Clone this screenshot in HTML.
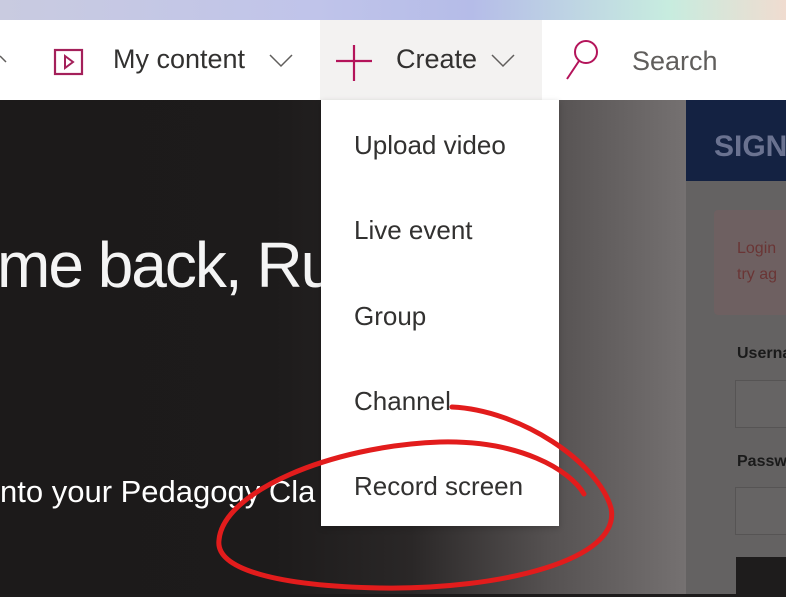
<!DOCTYPE html>
<html><head><meta charset="utf-8"><style>
*{margin:0;padding:0;box-sizing:border-box}
body{width:786px;height:594px;overflow:hidden;position:relative;font-family:"Liberation Sans",sans-serif;background:#1d1b1b}
.top{position:absolute;left:0;top:0;width:786px;height:20px;background:linear-gradient(90deg,#c9cbe0 0%,#c0c4ea 40%,#b5bce8 60%,#c7ecdf 85%,#f0dcd0 100%)}
.nav{position:absolute;left:0;top:20px;width:786px;height:80px;background:#fff}
.create{position:absolute;left:320px;top:20px;width:222px;height:80px;background:#f3f2f1}
.t{position:absolute;color:#323130;font-size:27px;white-space:nowrap}
.hero{position:absolute;left:0;top:100px;width:686px;height:494px;background:linear-gradient(90deg,#1c1a1a 0%,#1d1b1b 40%,#2a2727 60%,#555151 80%,#757171 100%)}
.right{position:absolute;left:686px;top:100px;width:100px;height:494px;background:#646262}
.sign{position:absolute;left:686px;top:100px;width:100px;height:81px;background:#142242;color:#6a7290;font-weight:bold;font-size:30px;padding:30px 0 0 28px}
.big{position:absolute;left:-3px;top:228px;color:#f4f4f4;font-size:64px;white-space:nowrap;letter-spacing:-2px}
.sub{position:absolute;left:0;top:474px;color:#fff;font-size:31px;white-space:nowrap}
.menu{position:absolute;left:321px;top:100px;width:238px;height:426px;background:#fff;box-shadow:0 2px 6px rgba(0,0,0,.2)}
.mi{position:absolute;left:33px;color:#323130;font-size:26px;white-space:nowrap}
</style></head><body>
<div class="top"></div>
<div class="nav"></div>
<div class="create"></div>
<svg style="position:absolute;left:0;top:20px" width="786" height="80">
<polyline points="0,36 6,42" fill="none" stroke="#605e5c" stroke-width="1.5"/>
<rect x="55" y="30" width="27" height="24" fill="none" stroke="#a4205a" stroke-width="2.2"/>
<path d="M65,36 L73,42 L65,48 Z" fill="none" stroke="#a4205a" stroke-width="2"/>
<polyline points="270,35 281,46 292,35" fill="none" stroke="#605e5c" stroke-width="1.5"/>
<path d="M354,25 V61 M336,41 H372" stroke="#b4145a" stroke-width="2.2"/>
<polyline points="492,35 503,46 514,35" fill="none" stroke="#605e5c" stroke-width="1.5"/>
<circle cx="586" cy="32" r="11" fill="none" stroke="#b4145a" stroke-width="2"/>
<path d="M579,41 L567,59" stroke="#b4145a" stroke-width="2"/>
</svg>
<div class="t" style="left:113px;top:44px">My content</div>
<div class="t" style="left:396px;top:44px">Create</div>
<div class="t" style="left:632px;top:46px;color:#605e5c">Search</div>
<div class="hero"></div>
<div class="right"></div>
<div class="sign">SIGN</div>
<div style="position:absolute;left:714px;top:210px;width:80px;height:105px;background:#6e6061;border-radius:4px"></div>
<div style="position:absolute;left:737px;top:236px;color:#6a3535;font-size:16px;line-height:26px">Login<br>try ag</div>
<div style="position:absolute;left:737px;top:345px;color:#1a1a1a;font-size:16px;font-weight:bold">Userna</div>
<div style="position:absolute;left:735px;top:380px;width:60px;height:48px;border:1px solid #565454;background:#666464"></div>
<div style="position:absolute;left:737px;top:453px;color:#1a1a1a;font-size:16px;font-weight:bold">Passw</div>
<div style="position:absolute;left:735px;top:487px;width:60px;height:48px;border:1px solid #565454;background:#666464"></div>
<div style="position:absolute;left:736px;top:557px;width:60px;height:40px;background:#1e1c1c"></div>
<div class="big">me back, Ru</div>
<div class="sub">nto your Pedagogy Cla</div>
<div class="menu">
<div class="mi" style="top:30px">Upload video</div>
<div class="mi" style="top:115px">Live event</div>
<div class="mi" style="top:201px">Group</div>
<div class="mi" style="top:286px">Channel</div>
<div class="mi" style="top:371px">Record screen</div>
</div>
<svg style="position:absolute;left:0;top:0" width="786" height="594">
<path d="M452,407 C520,410 598,462 611,508 C622,560 500,590 380,588 C280,586 215,570 219,540 C223,492 330,446 440,442 C520,440 570,470 584,494" fill="none" stroke="#e21c1c" stroke-width="5" stroke-linecap="round"/>
</svg>
</body></html>
